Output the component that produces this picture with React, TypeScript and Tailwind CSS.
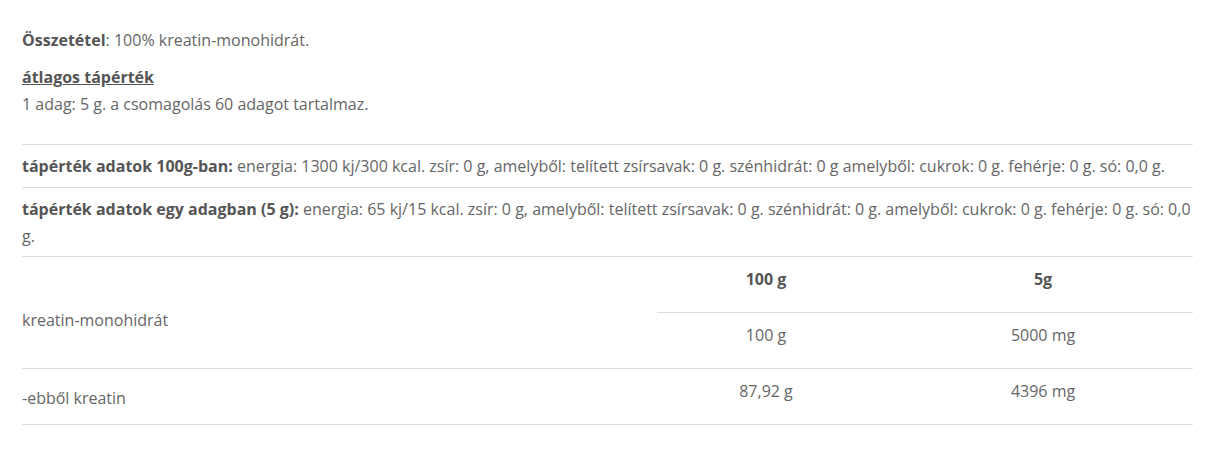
export default function App() {
  const line = "border-[#dedede]";
  return (
    <div
      className="w-[1206px] bg-white px-[22px] pt-[27px] text-[16px] leading-[27px] text-[#666]"
      style={{ fontFamily: '"Open Sans", "Liberation Sans", sans-serif' }}
    >
      <p className="mb-[10px]">
        <b className="font-bold text-[#555]">Összetétel</b>: 100% kreatin-monohidrát.
      </p>
      <p className="font-bold text-[#555] underline">átlagos tápérték</p>
      <p>1 adag: 5 g. a csomagolás 60 adagot tartalmaz.</p>

      <div className={`mt-[26px] w-[1171px] border-t ${line}`}>
        <p className={`border-b ${line} pt-[8px] pb-[7px]`}>
          <b className="font-bold text-[#555]">tápérték adatok 100g-ban:</b> energia: 1300
          kj/300 kcal. zsír: 0 g, amelyből: telített zsírsavak: 0 g. szénhidrát: 0 g amelyből:
          cukrok: 0 g. fehérje: 0 g. só: 0,0 g.
        </p>
        <p className={`border-b ${line} pt-[8px] pb-[6px]`}>
          <b className="font-bold text-[#555]">tápérték adatok egy adagban (5 g):</b> energia:
          65 kj/15 kcal. zsír: 0 g, amelyből: telített zsírsavak: 0 g. szénhidrát: 0 g.
          amelyből: cukrok: 0 g. fehérje: 0 g. só: 0,0 g.
        </p>

        {/* táblázat */}
        <div className="grid grid-cols-[635px_218px_318px]">
          <div className={`row-span-2 flex items-center border-b ${line} pt-[16px]`}>
            kreatin-monohidrát
          </div>
          <div className={`h-[56px] border-b ${line} pt-[9px] text-center font-bold text-[#555]`}>
            100 g
          </div>
          <div className={`h-[56px] border-b ${line} pt-[9px] pl-[18px] text-center font-bold text-[#555]`}>
            5g
          </div>
          <div className={`h-[56px] border-b ${line} pt-[9px] text-center`}>100 g</div>
          <div className={`h-[56px] border-b ${line} pt-[9px] pl-[18px] text-center`}>5000 mg</div>

          <div className={`flex h-[56px] items-center border-b ${line} pt-[4px]`}>
            -ebből kreatin
          </div>
          <div className={`h-[56px] border-b ${line} pt-[9px] text-center`}>87,92 g</div>
          <div className={`h-[56px] border-b ${line} pt-[9px] pl-[18px] text-center`}>4396 mg</div>
        </div>
      </div>
      <div className="h-[44px]" />
    </div>
  );
}
